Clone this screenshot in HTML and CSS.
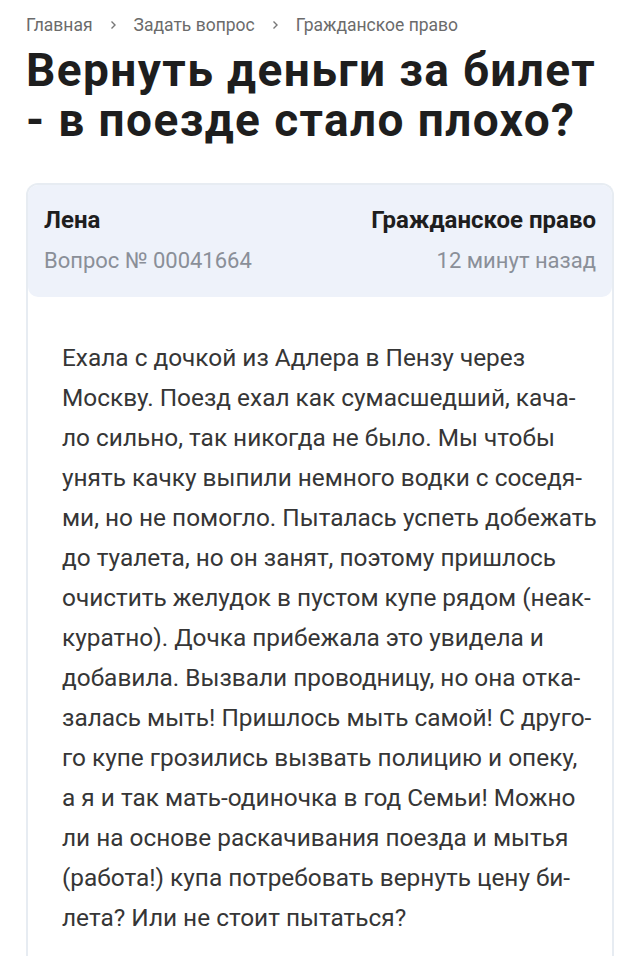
FILE: index.html
```html
<!DOCTYPE html>
<html lang="ru">

<head>
    <meta charset="UTF-8">
    <meta name="viewport" content="width=device-width, initial-scale=1.0">
    <title>Вернуть деньги за билет</title>
    <link rel="stylesheet" href="styles.css">
</head>

<body>
    <div class="page">
        <div class="crumbs">
            <a href="#" class="crumb">Главная</a>
            <svg class="sep" width="7" height="10" viewBox="0 0 7 10"><path d="M1.5 1.5 L5 5 L1.5 8.5" fill="none" stroke="#777" stroke-width="1.4"/></svg>
            <a href="#" class="crumb">Задать вопрос</a>
            <svg class="sep" width="7" height="10" viewBox="0 0 7 10"><path d="M1.5 1.5 L5 5 L1.5 8.5" fill="none" stroke="#777" stroke-width="1.4"/></svg>
            <a href="#" class="crumb">Гражданское право</a>
        </div>

        <h1 class="title">Вернуть деньги за билет<br>- в поезде стало плохо?</h1>

        <div class="card">
            <div class="card-head">
                <div class="author">Лена</div>
                <div class="category">Гражданское право</div>
                <div class="meta">Вопрос № 00041664</div>
                <div class="meta meta-right">12 минут назад</div>
            </div>
            <div class="card-body">
                <p class="question">
                    Ехала с дочкой из Адлера в Пензу через<br>
                    Москву. Поезд ехал как сумасшедший, кача-<br>
                    ло сильно, так никогда не было. Мы чтобы<br>
                    унять качку выпили немного водки с соседя-<br>
                    ми, но не помогло. Пыталась успеть добежать<br>
                    до туалета, но он занят, поэтому пришлось<br>
                    очистить желудок в пустом купе рядом (неак-<br>
                    куратно). Дочка прибежала это увидела и<br>
                    добавила. Вызвали проводницу, но она отка-<br>
                    залась мыть! Пришлось мыть самой! С друго-<br>
                    го купе грозились вызвать полицию и опеку,<br>
                    а я и так мать-одиночка в год Семьи! Можно<br>
                    ли на основе раскачивания поезда и мытья<br>
                    (работа!) купа потребовать вернуть цену би-<br>
                    лета? Или не стоит пытаться?
                </p>
            </div>
        </div>
    </div>
</body>

</html>
```

FILE: styles.css
```css
* {
    margin: 0;
    padding: 0;
    box-sizing: border-box;
}

body {
    font-family: Roboto, "Open Sans", sans-serif;
    color: #222;
    background: #fff;
}

.page {
    padding: 15px 26px 0;
}

.crumbs {
    display: flex;
    align-items: center;
    gap: 17px;
    font-size: 17.5px;
    line-height: 20px;
}

.crumb {
    color: #6b6b6b;
    text-decoration: none;
}

.title {
    margin-top: 10px;
    font-size: 46px;
    font-weight: 700;
    line-height: 50px;
    letter-spacing: 1.4px;
    color: #1e1e1e;
}

.card {
    margin-top: 38px;
    border: 2px solid #e7ecf2;
    border-bottom: none;
    border-radius: 12px 12px 0 0;
    height: 800px;
}

.card-head {
    display: grid;
    grid-template-columns: 1fr auto;
    row-gap: 11px;
    padding: 20px 16px 21px;
    background-color: #eef2fa;
    border-radius: 10px;
}

.author,
.category {
    font-size: 24px;
    font-weight: 700;
    line-height: 30px;
    color: #1e1e1e;
}

.category {
    text-align: right;
}

.meta {
    font-size: 22px;
    line-height: 30px;
    color: #8a8f98;
}

.meta-right {
    text-align: right;
}

.card-body {
    padding: 41px 34px;
}

.question {
    font-size: 24.4px;
    line-height: 40px;
    color: #363636;
    white-space: nowrap;
}
```
